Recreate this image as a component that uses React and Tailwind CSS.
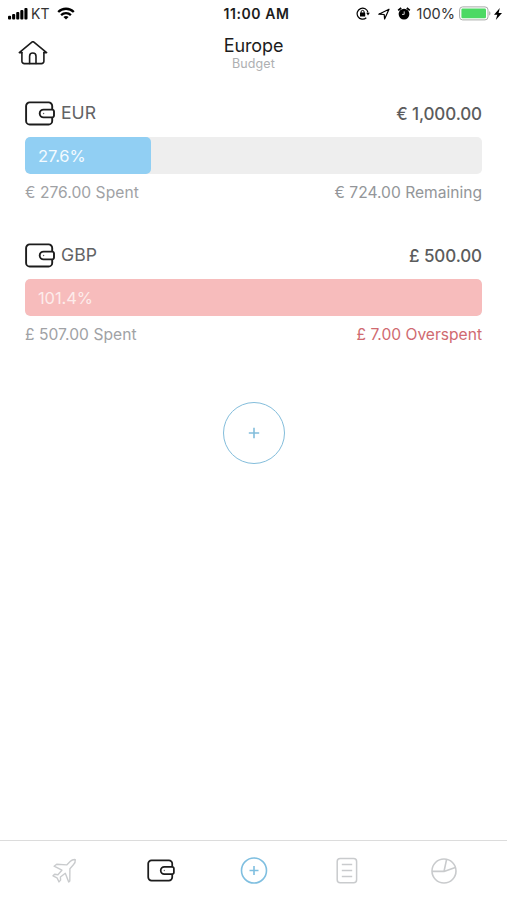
import clsx from "clsx";

const budgets = [
  {
    code: "EUR",
    total: "€ 1,000.00",
    percent: 27.6,
    spent: "€ 276.00 Spent",
    rest: "€ 724.00 Remaining",
    over: false,
  },
  {
    code: "GBP",
    total: "£ 500.00",
    percent: 101.4,
    spent: "£ 507.00 Spent",
    rest: "£ 7.00 Overspent",
    over: true,
  },
];

const WalletIcon = ({ className }) => (
  <svg viewBox="0 0 30 25" fill="none" stroke="currentColor" strokeWidth="1.9" strokeLinejoin="round" className={className}>
    <path d="M27.2 8.5V5a3.6 3.6 0 0 0-3.6-3.6H4.7A3.6 3.6 0 0 0 1.1 5v14.9a3.6 3.6 0 0 0 3.6 3.6h18.9a3.6 3.6 0 0 0 3.6-3.6v-3.5" />
    <path d="M18.6 8.6h8.6a1.8 1.8 0 0 1 1.8 1.8v4.2a1.8 1.8 0 0 1-1.8 1.8h-8.6a3.9 3.9 0 0 1 0-7.8Z" />
    <circle cx="18.6" cy="12.5" r="0.7" fill="currentColor" stroke="none" opacity="0.7" />
  </svg>
);

const HomeIcon = () => (
  <svg viewBox="0 0 30 24" fill="none" stroke="currentColor" strokeWidth="1.6" strokeLinecap="round" strokeLinejoin="round" className="h-6 w-[30px]">
    <path d="M3.9 11.6v8.6a2.4 2.4 0 0 0 2.4 2.4h17.2a2.4 2.4 0 0 0 2.4-2.4v-8.6" />
    <path d="M3.9 11.6H1.3L13.6 1.3a2 2 0 0 1 2.6 0l12.4 10.3h-2.7" />
    <path d="M11.6 22.4v-7.2a3.2 3.2 0 0 1 6.4 0v7.2" />
  </svg>
);

const SignalIcon = () => (
  <svg viewBox="0 0 20 12" fill="currentColor" className="h-3 w-5">
    <rect x="0" y="7.7" width="3.1" height="3.8" rx="1" />
    <rect x="4.1" y="6" width="3.1" height="5.5" rx="1" />
    <rect x="8.2" y="4" width="3.1" height="7.5" rx="1" />
    <rect x="12.3" y="2" width="3.1" height="9.5" rx="1" />
    <rect x="16.4" y="0" width="3.1" height="11.5" rx="1" />
  </svg>
);

const WifiIcon = () => (
  <svg viewBox="0 0 18 13" fill="none" stroke="currentColor" strokeWidth="2.3" className="h-[13px] w-[18px]">
    <path d="M1.2 5a11 11 0 0 1 15.6 0" />
    <path d="M4.1 8.1a7 7 0 0 1 9.8 0" />
    <path d="M6.4 10.1a4 4 0 0 1 5.2 0L9 12.5Z" fill="currentColor" stroke="none" />
  </svg>
);

const RotationLockIcon = () => (
  <svg viewBox="0 0 14 13" fill="none" stroke="currentColor" strokeWidth="1.2" className="h-[13px] w-[14px]">
    <path d="M12 5.5A5.5 5.5 0 1 0 10.3 10.8" />
    <path d="M10.2 5.8h3.6L12 8.5Z" fill="currentColor" stroke="none" />
    <rect x="4" y="5.6" width="5.2" height="4" rx="0.4" fill="currentColor" stroke="none" />
    <path d="M5.1 6V4.9a1.5 1.5 0 0 1 3 0V6" strokeWidth="1" />
  </svg>
);

const LocationIcon = () => (
  <svg viewBox="0 0 12 12" fill="none" stroke="currentColor" strokeWidth="1.2" strokeLinejoin="round" className="h-3 w-3">
    <path d="M11 1.2.8 6.2l5.4.3.4 4.4Z" />
  </svg>
);

const AlarmIcon = () => (
  <svg viewBox="0 0 14 13" fill="none" className="h-[13px] w-[14px]">
    <circle cx="7" cy="7.1" r="5.4" fill="currentColor" />
    <path d="M1.2 3.4 4.2 1M9.8 1l3 2.4" stroke="currentColor" strokeWidth="1.8" />
    <path d="M7.2 4.4v3H5" stroke="white" strokeWidth="0.8" />
  </svg>
);

const BatteryIcon = () => (
  <svg viewBox="0 0 33 15" fill="none" className="h-[15px] w-[33px]">
    <rect x="0.6" y="0.9" width="28.4" height="13" rx="3" stroke="#a9aaa9" strokeWidth="1" />
    <rect x="2.4" y="2.6" width="24.6" height="9.6" rx="1.2" fill="#4cd964" />
    <path d="M30.2 5.3c1.7.4 1.7 3.8 0 4.2Z" fill="#a9aaa9" />
  </svg>
);

const BoltIcon = () => (
  <svg viewBox="0 0 8 12" fill="currentColor" className="h-3 w-2">
    <path d="M5.8 0 0 6.8h3.3L1.8 12 8 4.9H4.6Z" />
  </svg>
);

const PlaneIcon = () => (
  <svg viewBox="0 0 26 26" fill="none" stroke="currentColor" strokeWidth="1.4" strokeLinejoin="round" className="size-[26px]">
    <path d="M24.3 1.6c-2-.2-3.6.4-4.9 1.7l-3.7 3.6-10-.7-2.6 2 7.8 4-4 4.5-3.3-.4-1.6 1.5 4 2 2 4.1 1.6-1.8-.2-3.1 4.9-3.7 3.4 8.7 1.1-1.1.1-12.2 3.5-3.9c1.3-1.3 2.1-3.2 1.9-5.2Z" />
  </svg>
);

const AddIcon = () => (
  <svg viewBox="0 0 28 28" fill="none" stroke="currentColor" strokeWidth="1.6" className="size-7">
    <circle cx="14" cy="13.5" r="12.5" />
    <path d="M14 9v9M9.5 13.5h9" />
  </svg>
);

const ListIcon = () => (
  <svg viewBox="0 0 22 27" fill="none" stroke="currentColor" strokeWidth="1.5" className="h-[27px] w-[22px]">
    <rect x="1.2" y="1.4" width="19.4" height="24.4" rx="3" />
    <path d="M5.8 7.6h10.4M5.8 13.6h10.4M5.8 19.6h10.4" />
  </svg>
);

const ChartIcon = () => (
  <svg viewBox="0 0 26 26" fill="none" stroke="currentColor" strokeWidth="1.6" className="size-[26px]">
    <circle cx="13" cy="13" r="12" />
    <path d="M1 13.4h12L15.6 1.4M13 13.4l11.3-4" />
  </svg>
);

const StatusBar = () => (
  <div className="grid h-[27px] grid-cols-[1fr_auto_1fr] items-center pl-2 pr-[5px] text-black">
    <div className="flex items-center">
      <SignalIcon />
      <span className="ml-[3px] text-[14px] text-[#333]">KT</span>
      <span className="ml-[8px]">
        <WifiIcon />
      </span>
    </div>
    <span className="pl-[3px] text-[14px] font-semibold tracking-[0.55px] text-[#1c1c1c]">11:00 AM</span>
    <div className="flex items-center justify-end">
      <RotationLockIcon />
      <span className="ml-[8px]">
        <LocationIcon />
      </span>
      <span className="ml-[7px]">
        <AlarmIcon />
      </span>
      <span className="ml-[6px] text-[14.5px] text-[#333]">100%</span>
      <span className="ml-[4px]">
        <BatteryIcon />
      </span>
      <span className="ml-[2px]">
        <BoltIcon />
      </span>
    </div>
  </div>
);

const Header = () => (
  <header className="grid h-[53px] grid-cols-[1fr_auto_1fr] items-start px-[18px]">
    <button className="mt-[14px] w-[30px] text-[#1c1c1c]">
      <HomeIcon />
    </button>
    <div className="mt-[9px] text-center">
      <h1 className="text-[18px] leading-5 tracking-[-0.1px] text-[#1c1c1c]">Europe</h1>
      <p className="text-[12.5px] leading-4 tracking-[0.1px] text-[#aeb0b2]">Budget</p>
    </div>
  </header>
);

const BudgetRow = ({ budget }) => (
  <section>
    <div className="flex h-6 items-center justify-between">
      <div className="flex items-center gap-[6px]">
        <WalletIcon className="h-[25px] w-[30px] text-[#1c1c1c]" />
        <span className="pt-px text-[17.6px] text-[#626365]">{budget.code}</span>
      </div>
      <span className="pt-[3px] text-[17px] font-medium tracking-[-0.1px] text-[#5b5c5d]">{budget.total}</span>
    </div>
    <div className="mt-3 h-[37px] overflow-hidden rounded-[5px] bg-[#eeeeee]">
      <div
        className={clsx(
          "flex h-full items-center rounded-[5px] pt-[2px] pl-[13px] text-[16.5px] tracking-[-0.1px]",
          budget.over ? "bg-[#f7bcbc] text-[#fdeceb]" : "bg-[#91cff3] text-[#f4fbff]"
        )}
        style={{ width: `${Math.min(budget.percent, 100)}%` }}
      >
        {budget.percent}%
      </div>
    </div>
    <div className="mt-[6px] flex h-6 items-center justify-between pt-px text-[15.6px]">
      <span className="tracking-[0.05px] text-[#a0a2a5]">{budget.spent}</span>
      <span className={budget.over ? "text-[#d06a70]" : "text-[#939699]"}>{budget.rest}</span>
    </div>
  </section>
);

const TabBar = () => (
  <nav className="flex h-[60px] items-center border-t border-[#dcdcdc] pl-[51px] text-[#c9cbcd]">
    <button>
      <PlaneIcon />
    </button>
    <button className="ml-[70px] text-[#1c1c1c]">
      <WalletIcon className="h-[23px] w-[28px]" />
    </button>
    <button className="ml-[65px] text-[#7fbfe0]">
      <AddIcon />
    </button>
    <button className="ml-[68px]">
      <ListIcon />
    </button>
    <button className="ml-[73px]">
      <ChartIcon />
    </button>
  </nav>
);

export default function App() {
  return (
    <div className="flex h-[900px] w-[507px] flex-col overflow-hidden bg-white font-['Inter','Liberation_Sans',sans-serif] whitespace-nowrap">
      <StatusBar />
      <Header />
      <main className="flex flex-1 flex-col px-[25px] pt-[21px]">
        <div className="flex flex-col gap-[39px]">
          {budgets.map((budget) => (
            <BudgetRow key={budget.code} budget={budget} />
          ))}
        </div>
        <button className="mt-[56px] flex size-[62px] items-center justify-center self-center rounded-full border-[1.5px] border-[#83bddb] text-[#83bddb]">
          <svg viewBox="0 0 12 12" stroke="currentColor" strokeWidth="1.6" className="size-3">
            <path d="M6 .8v10.4M.8 6h10.4" />
          </svg>
        </button>
      </main>
      <TabBar />
    </div>
  );
}
